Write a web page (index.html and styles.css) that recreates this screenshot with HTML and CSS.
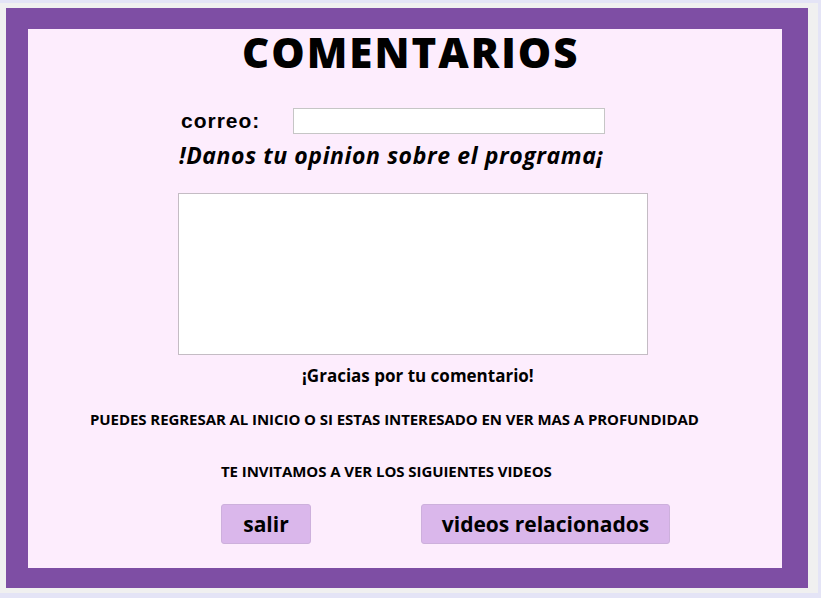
FILE: index.html
```html
<!DOCTYPE html>
<html lang="es">
<head>
    <meta charset="UTF-8">
    <meta name="viewport" content="width=device-width, initial-scale=1.0">
    <title>Comentarios</title>
    <link rel="stylesheet" href="styles.css">
</head>
<body>
    <div class="marco">
        <div class="contenido">
            <h1 class="titulo">COMENTARIOS</h1>

            <div class="fila-correo">
                <label for="correo">correo:</label>
                <input type="text" id="correo">
            </div>

            <p class="opinion">!Danos tu opinion sobre el programa¡</p>

            <textarea id="comentario"></textarea>

            <p class="gracias">¡Gracias por tu comentario!</p>
            <p class="aviso aviso-1">PUEDES REGRESAR AL INICIO O SI ESTAS INTERESADO EN VER MAS A PROFUNDIDAD</p>
            <p class="aviso aviso-2">TE INVITAMOS A VER LOS SIGUIENTES VIDEOS</p>

            <div class="acciones">
                <button id="salir-btn" class="boton boton-salir">salir</button>
                <button id="videos-btn" class="boton boton-videos">videos relacionados</button>
            </div>
        </div>
    </div>
</body>
</html>
```

FILE: styles.css
```css
html {
    background-color: #f0f0f0;
}

body {
    margin: 0;
    height: 598px;
    box-sizing: border-box;
    border-top: 3px solid #e4e4f6;
    border-right: 3px solid #e4e4f6;
    border-bottom: 5px solid #e4e4f6;
    padding: 5px 10px 5px 6px;
    font-family: "Open Sans", sans-serif;
    color: #000;
}

.marco {
    background-color: #7e4ea4;
    height: 580px;
    box-sizing: border-box;
    padding: 21px 26px 20px 22px;
}

.contenido {
    background-color: #fdedfd;
    height: 539px;
    padding-top: 2px;
    box-sizing: border-box;
}

.titulo {
    margin: 0;
    padding-left: 214px;
    font-size: 42px;
    line-height: 42px;
    font-weight: 800;
    letter-spacing: 2px;
}

.fila-correo {
    display: flex;
    align-items: center;
    margin-top: 35px;
    padding-left: 153px;
    height: 26px;
}

.fila-correo label {
    width: 112px;
    font-family: "Liberation Sans", Arial, sans-serif;
    font-size: 21px;
    font-weight: bold;
    letter-spacing: 1px;
}

.fila-correo input {
    width: 312px;
    height: 26px;
    box-sizing: border-box;
    border: 1px solid #c6c6c6;
    background-color: #fff;
    margin: 0;
}

.opinion {
    margin: 8px 0 0;
    padding-left: 151px;
    font-size: 23px;
    line-height: 26px;
    font-weight: bold;
    font-style: italic;
    letter-spacing: 0.6px;
}

#comentario {
    display: block;
    margin: 25px 0 0 150px;
    width: 470px;
    height: 162px;
    box-sizing: border-box;
    border: 1px solid #c4bcc4;
    background-color: #fff;
    resize: none;
}

.gracias {
    margin: 10px 0 0;
    padding-left: 274px;
    font-size: 17px;
    line-height: 22px;
    font-weight: bold;
}

.aviso {
    margin: 0;
    font-size: 15px;
    line-height: 20px;
    font-weight: bold;
    letter-spacing: -0.07px;
}

.aviso-1 {
    margin-top: 22px;
    padding-left: 62px;
}

.aviso-2 {
    margin-top: 32px;
    padding-left: 193px;
}

.acciones {
    display: flex;
    gap: 110px;
    margin-top: 23px;
    padding-left: 193px;
}

.boton {
    height: 40px;
    margin: 0;
    padding: 0;
    border: 1px solid #cdb0dc;
    border-radius: 3px;
    background-color: #dab7eb;
    font-family: "Open Sans", sans-serif;
    font-size: 21px;
    font-weight: bold;
    color: #000;
    cursor: pointer;
}

.boton-salir {
    width: 90px;
}

.boton-videos {
    width: 249px;
}
```
